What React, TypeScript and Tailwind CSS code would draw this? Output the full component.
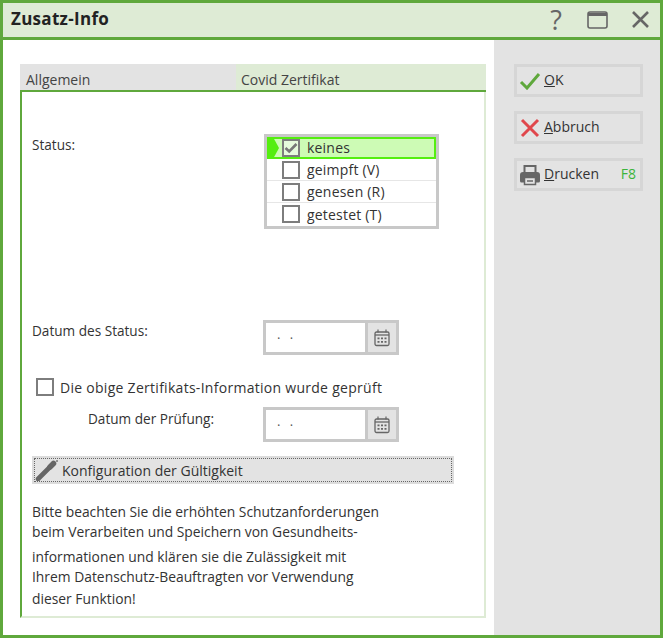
const font = { fontFamily: '"Open Sans", "Noto Sans", sans-serif' };

function Check({ checked }: { checked?: boolean }) {
  return (
    <span className={checked ? "flex h-[18px] w-[18px] shrink-0 items-center justify-center border-2 border-[#7d7d7d] bg-[#e6fbdc]" : "flex h-[18px] w-[18px] shrink-0 items-center justify-center border-2 border-[#7d7d7d] bg-white"}>
      {checked && (
        <svg width="14" height="14" viewBox="0 0 14 14" fill="none">
          <path d="M1.5 7 5.2 10.5 12.5 3" stroke="#777" strokeWidth="2.6" />
        </svg>
      )}
    </span>
  );
}

function DateField() {
  return (
    <div className="flex h-[35px] w-[136px] border-[3px] border-[#c8c8c8] bg-white">
      <div className="flex-1 pl-[11px] text-[13px] leading-[22px] tracking-[3px] text-[#555]">. .</div>
      <div className="flex w-[31px] items-center justify-center border-l-[3px] border-[#c8c8c8] bg-[#e3e3e3]">
        <svg width="16" height="18" viewBox="0 0 16 18" fill="none">
          <path d="M4 0.5v3M12 0.5v3" stroke="#666" strokeWidth="1.2" />
          <rect x="1" y="3" width="14" height="13.5" rx="1.5" stroke="#666" strokeWidth="1.3" />
          <path d="M1 6h14" stroke="#666" strokeWidth="1.3" />
          <path d="M3.5 8.5h2v1.7h-2zM7 8.5h2v1.7H7zM10.5 8.5h2v1.7h-2zM3.5 12h2v1.7h-2zM7 12h2v1.7H7zM10.5 12h2v1.7h-2z" fill="#666" />
        </svg>
      </div>
    </div>
  );
}

function SideButton({ icon, first, rest, hint }: { icon: React.ReactNode; first: string; rest: string; hint?: string }) {
  return (
    <div className="flex h-[33px] w-[129px] items-center border-[3px] border-[#d6d6d6] pr-[4px]">
      <span className="flex w-[26px] shrink-0 justify-center">{icon}</span>
      <span className="ml-[1px] pb-[2px] text-[14px] leading-[22px] text-[#333]"><span className="underline">{first}</span>{rest}</span>
      {hint && <span className="ml-auto pb-[2px] text-[14px] leading-[22px] text-[#3cb43c]">{hint}</span>}
    </div>
  );
}

function StatusRow({ label, checked }: { label: string; checked?: boolean }) {
  if (checked) {
    return (
      <div className="relative flex h-[22px] items-center border-2 border-[#55ee10] bg-[#cdfbb5] pb-[1px] pl-[13px]">
        <span className="absolute left-[-2px] top-[-2px] h-[22px] w-[12px] bg-[#55ee10] [clip-path:polygon(0_0,50%_0,100%_50%,50%_100%,0_100%)]" />
        <span className="relative"><Check checked /></span>
        <span className="relative ml-[7px] text-[14px] tracking-[0.2px] text-[#333]">{label}</span>
      </div>
    );
  }
  return (
    <div className="flex h-[22px] items-center border-b border-[#e6e6e6] pl-[15px] last:border-b-0">
      <Check />
      <span className="ml-[7px] text-[14px] tracking-[0.2px] text-[#333]">{label}</span>
    </div>
  );
}

export default function App() {
  return (
    <div style={font} className="flex h-[638px] w-[663px] flex-col border-[3px] border-[#5fa83c] bg-white">
      {/* title bar */}
      <div className="flex h-[37px] shrink-0 items-center justify-between border-b-[3px] border-[#5fa83c] bg-[#deebd5] pl-[8px] pr-[10px]">
        <span className="pb-[3px] text-[17px] font-bold tracking-[0.3px] text-[#222]">Zusatz-Info</span>
        <div className="flex items-center pb-[1px]">
          <span className="text-[27px] leading-none text-[#666]">?</span>
          <svg className="ml-[25px]" width="21" height="18" viewBox="0 0 21 18" fill="none">
            <rect x="1" y="1" width="19" height="16" rx="2" stroke="#666" strokeWidth="1.6" />
            <path d="M1 3.5h19" stroke="#666" strokeWidth="3" />
          </svg>
          <svg className="ml-[23px]" width="19" height="19" viewBox="0 0 19 19" fill="none">
            <path d="M2 2l15 15M17 2 2 17" stroke="#666" strokeWidth="2.6" />
          </svg>
        </div>
      </div>

      <div className="flex min-h-0 flex-1">
        {/* left side */}
        <div className="flex-1 pl-[17px] pt-[24px]">
          <div className="flex h-[28px] w-[466px] border-b-[2px] border-[#5fa83c] bg-[#e3e3e3] text-[14px] leading-[31px] text-[#444]">
            <div className="w-[216px] pl-[6px]">Allgemein</div>
            <div className="flex-1 bg-[#deebd5] pl-[5px]">Covid Zertifikat</div>
          </div>
          <div className="h-[526px] w-[466px] border-b-2 border-l-2 border-r-2 border-b-[#deebd5] border-l-[#5fa83c] border-r-[#deebd5] pl-[10px] text-[13.6px] text-[#333]">
            <div className="flex pt-[42px]">
              <div className="w-[232px] pt-[1px]">Status:</div>
              <div className="h-[95px] w-[175px] border-[3px] border-[#c8c8c8] bg-white">
                <StatusRow label="keines" checked />
                <StatusRow label="geimpft (V)" />
                <StatusRow label="genesen (R)" />
                <StatusRow label="getestet (T)" />
              </div>
            </div>
            <div className="mt-[91px] flex">
              <div className="w-[231px] pt-[1px]">Datum des Status:</div>
              <DateField />
            </div>
            <div className="mt-[23px] flex h-[18px] items-center pl-[4px] text-[14px]">
              <Check />
              <span className="ml-[6px] tracking-[0.28px]">Die obige Zertifikats-Information wurde geprüft</span>
            </div>
            <div className="mt-[11px] flex">
              <div className="w-[231px] pl-[56px] pt-[2px]">Datum der Prüfung:</div>
              <DateField />
            </div>
            <div className="mt-[14px] flex h-[28px] w-[422px] items-center border-2 border-[#dcdcdc] bg-[#e3e3e3] text-[14px] outline-1 -outline-offset-3 outline-dotted outline-[#666]">
              <svg className="ml-[1px]" width="24" height="22" viewBox="0 0 24 22" fill="none">
                <path d="M3 20 14 9" stroke="#666" strokeWidth="4.6" strokeLinecap="round" />
                <path d="M15 8l3.5-3.5" stroke="#666" strokeWidth="5.5" strokeLinecap="round" />
                <path d="M22 1v2M21 2h2" stroke="#666" strokeWidth="0.8" />
              </svg>
              <span className="ml-[3px]">Konfiguration der Gültigkeit</span>
            </div>
            <div className="mt-[18px] text-[13.85px] leading-[20px]">
              <div>Bitte beachten Sie die erhöhten Schutzanforderungen</div>
              <div>beim Verarbeiten und Speichern von Gesundheits-</div>
              <div className="mt-[5px]">informationen und klären sie die Zulässigkeit mit</div>
              <div>Ihrem Datenschutz-Beauftragten vor Verwendung</div>
              <div className="mt-[2px]">dieser Funktion!</div>
            </div>
          </div>
        </div>

        {/* right side */}
        <div className="flex w-[166px] shrink-0 flex-col gap-[14px] bg-[#e3e3e3] pl-[20px] pt-[24px]">
          <SideButton
            first="O"
            rest="K"
            icon={
              <svg width="22" height="18" viewBox="0 0 22 18" fill="none">
                <path d="M2 10l6 6L20 2" stroke="#5fa83c" strokeWidth="3" />
              </svg>
            }
          />
          <SideButton
            first="A"
            rest="bbruch"
            icon={
              <svg width="20" height="20" viewBox="0 0 20 20" fill="none">
                <path d="M2 2l16 16M18 2 2 18" stroke="#e0474c" strokeWidth="3" />
              </svg>
            }
          />
          <SideButton
            first="D"
            rest="rucken"
            hint="F8"
            icon={
              <svg width="22" height="22" viewBox="0 0 22 22" fill="none">
                <path d="M5.5 8V2h11v6" stroke="#666" strokeWidth="2" />
                <path d="M1 11a3 3 0 0 1 3-3h14a3 3 0 0 1 3 3v6a1.5 1.5 0 0 1-1.5 1.5H2.500A1.500 1.500 0 0 1 1 17z" fill="#666" />
                <path d="M5.500 13.500h11v7h-11z" fill="#e3e3e3" stroke="#666" strokeWidth="1.500" />
                <path d="M8 17h6" stroke="#666" strokeWidth="1.500" />
              </svg>
            }
          />
        </div>
      </div>
    </div>
  );
}
